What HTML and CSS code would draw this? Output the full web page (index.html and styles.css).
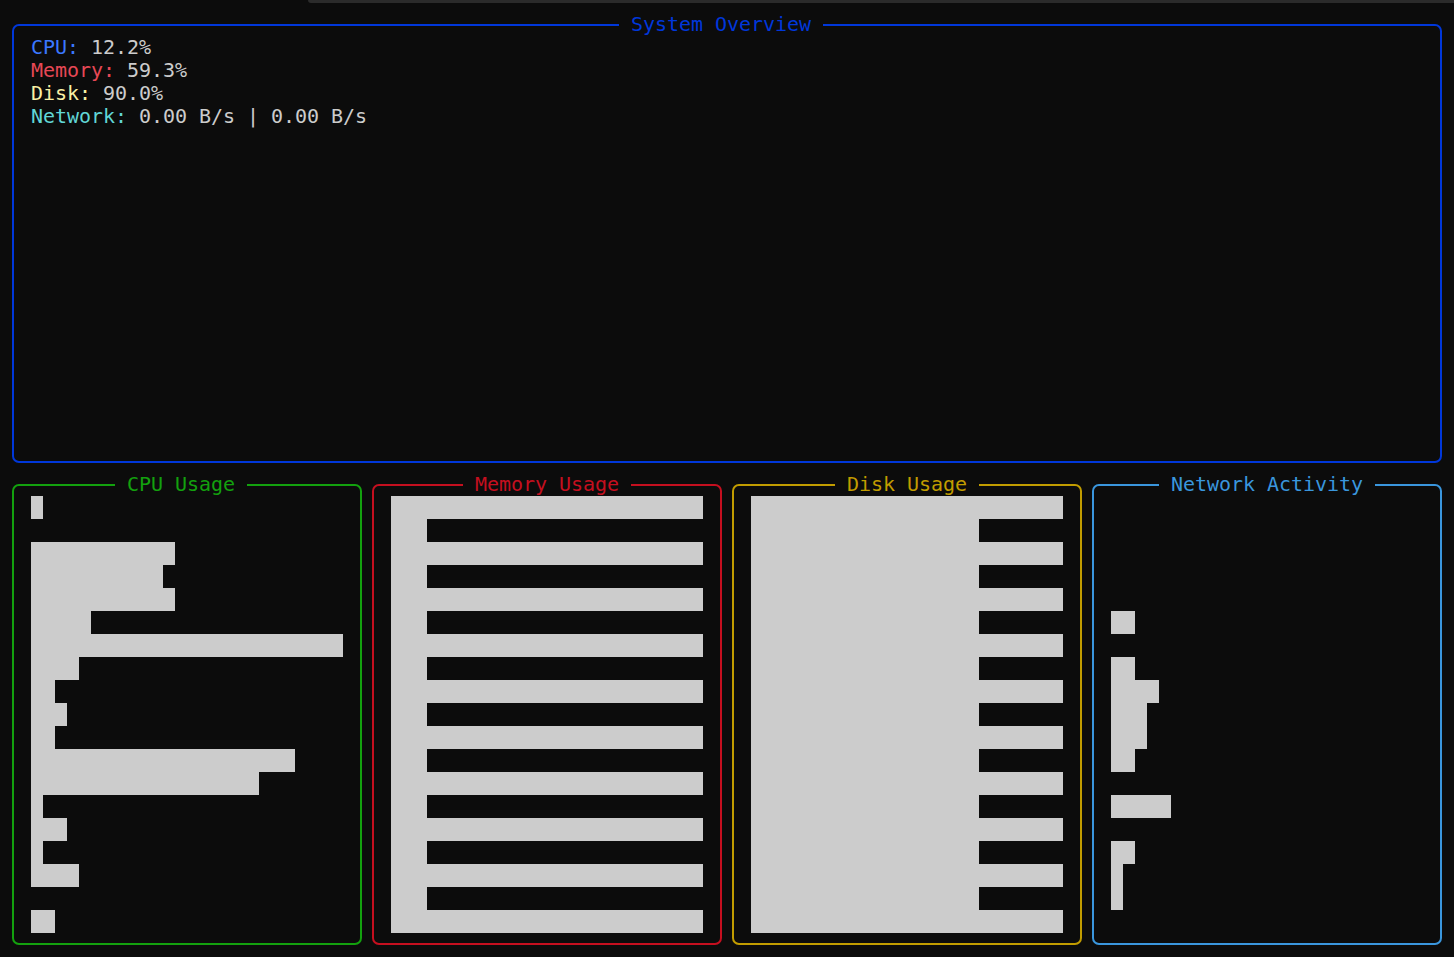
FILE: index.html
```html
<!DOCTYPE html>
<html lang="en">
<head>
<meta charset="utf-8">
<title>System Monitor</title>
<link rel="stylesheet" href="styles.css">
</head>
<body>
<div class="tabstrip"></div>
<main class="screen">
  <fieldset class="panel panel-overview">
    <legend class="panel-title">System Overview</legend>
    <div class="stats">
      <div class="stat"><span class="lbl lbl-cpu">CPU:</span> 12.2%</div>
      <div class="stat"><span class="lbl lbl-mem">Memory:</span> 59.3%</div>
      <div class="stat"><span class="lbl lbl-disk">Disk:</span> 90.0%</div>
      <div class="stat"><span class="lbl lbl-net">Network:</span> 0.00 B/s | 0.00 B/s</div>
    </div>
  </fieldset>
  <div class="row">
    <fieldset class="panel panel-small panel-cpu">
      <legend class="panel-title">CPU Usage</legend>
      <div class="chart">
        <div class="bar" style="width:12px"></div>
        <div class="bar" style="width:0px"></div>
        <div class="bar" style="width:144px"></div>
        <div class="bar" style="width:132px"></div>
        <div class="bar" style="width:144px"></div>
        <div class="bar" style="width:60px"></div>
        <div class="bar" style="width:312px"></div>
        <div class="bar" style="width:48px"></div>
        <div class="bar" style="width:24px"></div>
        <div class="bar" style="width:36px"></div>
        <div class="bar" style="width:24px"></div>
        <div class="bar" style="width:264px"></div>
        <div class="bar" style="width:228px"></div>
        <div class="bar" style="width:12px"></div>
        <div class="bar" style="width:36px"></div>
        <div class="bar" style="width:12px"></div>
        <div class="bar" style="width:48px"></div>
        <div class="bar" style="width:0px"></div>
        <div class="bar" style="width:24px"></div>
      </div>
    </fieldset>
    <fieldset class="panel panel-small panel-mem">
      <legend class="panel-title">Memory Usage</legend>
      <div class="chart">
        <div class="bar" style="width:312px"></div>
        <div class="bar" style="width:36px"></div>
        <div class="bar" style="width:312px"></div>
        <div class="bar" style="width:36px"></div>
        <div class="bar" style="width:312px"></div>
        <div class="bar" style="width:36px"></div>
        <div class="bar" style="width:312px"></div>
        <div class="bar" style="width:36px"></div>
        <div class="bar" style="width:312px"></div>
        <div class="bar" style="width:36px"></div>
        <div class="bar" style="width:312px"></div>
        <div class="bar" style="width:36px"></div>
        <div class="bar" style="width:312px"></div>
        <div class="bar" style="width:36px"></div>
        <div class="bar" style="width:312px"></div>
        <div class="bar" style="width:36px"></div>
        <div class="bar" style="width:312px"></div>
        <div class="bar" style="width:36px"></div>
        <div class="bar" style="width:312px"></div>
      </div>
    </fieldset>
    <fieldset class="panel panel-small panel-disk">
      <legend class="panel-title">Disk Usage</legend>
      <div class="chart">
        <div class="bar" style="width:312px"></div>
        <div class="bar" style="width:228px"></div>
        <div class="bar" style="width:312px"></div>
        <div class="bar" style="width:228px"></div>
        <div class="bar" style="width:312px"></div>
        <div class="bar" style="width:228px"></div>
        <div class="bar" style="width:312px"></div>
        <div class="bar" style="width:228px"></div>
        <div class="bar" style="width:312px"></div>
        <div class="bar" style="width:228px"></div>
        <div class="bar" style="width:312px"></div>
        <div class="bar" style="width:228px"></div>
        <div class="bar" style="width:312px"></div>
        <div class="bar" style="width:228px"></div>
        <div class="bar" style="width:312px"></div>
        <div class="bar" style="width:228px"></div>
        <div class="bar" style="width:312px"></div>
        <div class="bar" style="width:228px"></div>
        <div class="bar" style="width:312px"></div>
      </div>
    </fieldset>
    <fieldset class="panel panel-small panel-net">
      <legend class="panel-title">Network Activity</legend>
      <div class="chart">
        <div class="bar" style="width:0px"></div>
        <div class="bar" style="width:0px"></div>
        <div class="bar" style="width:0px"></div>
        <div class="bar" style="width:0px"></div>
        <div class="bar" style="width:0px"></div>
        <div class="bar" style="width:24px"></div>
        <div class="bar" style="width:0px"></div>
        <div class="bar" style="width:24px"></div>
        <div class="bar" style="width:48px"></div>
        <div class="bar" style="width:36px"></div>
        <div class="bar" style="width:36px"></div>
        <div class="bar" style="width:24px"></div>
        <div class="bar" style="width:0px"></div>
        <div class="bar" style="width:60px"></div>
        <div class="bar" style="width:0px"></div>
        <div class="bar" style="width:24px"></div>
        <div class="bar" style="width:12px"></div>
        <div class="bar" style="width:12px"></div>
        <div class="bar" style="width:0px"></div>
      </div>
    </fieldset>
  </div>
</main>
</body>
</html>
```
FILE: styles.css
```css
html, body {
  margin: 0;
  padding: 0;
  background: #0c0c0c;
}

body {
  font-family: "DejaVu Sans Mono", "Liberation Mono", monospace;
  font-size: 20px;
  letter-spacing: -0.04px;
  line-height: 23px;
  color: #cccccc;
  width: 1454px;
  height: 957px;
  overflow: hidden;
}

.tabstrip {
  height: 3px;
  margin-left: 308px;
  background: #2b2b2b;
  border-bottom-left-radius: 4px;
}

.screen {
  padding: 10px 12px 0 12px;
}

.panel {
  margin: 0;
  box-sizing: border-box;
  min-width: 0;
  border: 2px solid;
  border-radius: 7px;
  padding: 0 17px;
}

.panel-title {
  padding: 0 12px 1px;
  line-height: 23px;
  white-space: pre;
}

.panel-overview {
  width: 1430px;
  height: 450px;
  border-color: #0037da;
}
.panel-overview .panel-title {
  color: #0037da;
  margin-left: 588px;
}

.stats {
  margin-top: -1px;
}

.stat {
  height: 23px;
  white-space: pre;
}

.lbl-cpu { color: #3b78ff; }
.lbl-mem { color: #e74856; }
.lbl-disk { color: #f9f1a5; }
.lbl-net { color: #61d6d6; }

.row {
  display: flex;
  gap: 10px;
  margin-top: 10px;
}

.panel-small {
  width: 350px;
  height: 472px;
  flex: none;
}

.panel-cpu { border-color: #13a10e; }
.panel-cpu .panel-title { color: #13a10e; margin-left: 84px; }

.panel-mem { border-color: #c50f1f; }
.panel-mem .panel-title { color: #c50f1f; margin-left: 72px; }

.panel-disk { border-color: #c19c00; }
.panel-disk .panel-title { color: #c19c00; margin-left: 84px; }

.panel-net { border-color: #3a96dd; }
.panel-net .panel-title { color: #3a96dd; margin-left: 48px; }

.chart {
  margin-top: -1px;
  display: flex;
  flex-direction: column;
  align-items: flex-start;
}

.bar {
  height: 23px;
  background: #cccccc;
  flex: none;
}
```
